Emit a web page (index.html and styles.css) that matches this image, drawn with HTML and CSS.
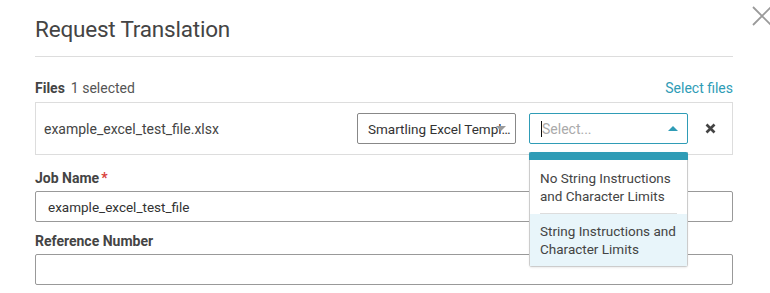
FILE: index.html
```html
<!DOCTYPE html>
<html>
<head>
<meta charset="utf-8">
<link rel="stylesheet" href="styles.css">
</head>
<body>
<div class="modal">
  <svg class="close" width="20" height="20" viewBox="0 0 20 20"><path d="M1 1L19 19M19 1L1 19" stroke="#9a9a9a" stroke-width="1.8" fill="none"/></svg>
  <h1 class="title">Request Translation</h1>
  <div class="files-head">
    <div class="label"><b>Files</b><span class="count">1 selected</span></div>
    <a class="link">Select files</a>
  </div>
  <div class="file-box">
    <div class="file-name">example_excel_test_file.xlsx</div>
    <div class="tpl-select">
      <span class="tpl-text">Smartling Excel Templ…</span>
      <span class="tpl-arrow"></span>
    </div>
    <div class="combo">
      <div class="combo-input"><span class="caret"></span><span class="placeholder">Select...</span><span class="up-arrow"></span></div>
      <div class="menu">
        <div class="menu-top"></div>
        <div class="opt first">No String Instructions and Character Limits</div>
        <div class="sep-wrap"><div class="sep"></div></div>
        <div class="opt active">String Instructions and Character Limits</div>
      </div>
    </div>
    <svg class="remove" width="11" height="11" viewBox="0 0 11 11"><path d="M1.5 1.5L9.5 9.5M9.5 1.5L1.5 9.5" stroke="#444" stroke-width="2.6" fill="none"/></svg>
  </div>
  <div class="field job">
    <div class="label"><b>Job Name</b><span class="req">*</span></div>
    <div class="input">example_excel_test_file</div>
  </div>
  <div class="field ref">
    <div class="label"><b>Reference Number</b></div>
    <div class="input"></div>
  </div>
</div>
</body>
</html>
```
FILE: styles.css
```css
* { box-sizing: border-box; }
html, body { margin: 0; padding: 0; background: #fff; overflow: hidden; }
body { font-family: Roboto, "Liberation Sans", sans-serif; color: #444; font-size: 14px; }
.modal { position: relative; width: 770px; height: 293px; padding: 0 37px 0 35px; }
.close { position: absolute; left: 752px; top: 6px; }
.title { margin: 0; padding-top: 16px; height: 57px; font-weight: 400; font-size: 22.5px; line-height: 26px; color: #444; border-bottom: 1px solid #ddd; letter-spacing: -0.2px; }
.files-head { display: flex; justify-content: space-between; align-items: flex-end; height: 45px; padding-bottom: 6px; }
.label { font-size: 14px; line-height: 16px; }
.label b { font-weight: 700; color: #444; }
.count { margin-left: 6px; color: #555; }
.req { color: #d9403a; margin-left: 2px; font-weight: 700; }
.link { color: #2f9cb6; font-size: 14px; line-height: 16px; }
.file-box { position: relative; display: flex; align-items: center; height: 53px; border: 1px solid #ddd; padding: 0 16px 0 8px; }
.file-name { flex: 1; font-size: 14px; color: #444; }
.tpl-select { position: relative; width: 159px; height: 31px; border: 1px solid #888; border-radius: 2px; padding: 0 0 0 10px; display: flex; align-items: center; }
.tpl-text { font-size: 13.5px; color: #333; white-space: nowrap; width: 142px; }
.tpl-arrow { position: absolute; left: 138px; top: 12px; width: 0; height: 0; border-left: 5px solid transparent; border-right: 5px solid transparent; border-top: 5px solid #999; }
.combo { position: relative; width: 159px; margin-left: 13px; }
.combo-input { position: relative; height: 31px; border: 1px solid #2f9cb6; border-radius: 2px; display: flex; align-items: center; padding-left: 11px; }
.caret { width: 1px; height: 16px; background: #111; }
.placeholder { color: #aaa; font-size: 14px; }
.up-arrow { position: absolute; left: 138px; top: 12px; width: 0; height: 0; border-left: 5px solid transparent; border-right: 5px solid transparent; border-bottom: 5px solid #2f9cb6; }
.menu { position: absolute; left: 0; top: 39px; width: 159px; background: #fff; border: 1px solid #ccc; border-top: none; border-radius: 0 0 3px 3px; box-shadow: 0 1px 2px rgba(0,0,0,0.08); z-index: 2; }
.menu-top { height: 8px; background: #2f9cb6; margin: 0 -1px; border-radius: 2px 2px 0 0; }
.opt { padding: 8px 10px; font-size: 13.5px; line-height: 18px; color: #444; }
.opt.first { padding-top: 9px; }
.sep-wrap { padding: 0 10px; }
.sep { height: 1px; background: #ddd; }
.opt.active { background: #e8f5fa; }
.remove { margin-left: 17px; }
.field .label { height: 36px; padding-top: 15px; }
.field.ref .label { height: 32px; padding-top: 11px; }
.input { height: 31px; border: 1px solid #999; border-radius: 2px; padding-left: 12px; display: flex; align-items: center; font-size: 13.5px; color: #333; }
```
